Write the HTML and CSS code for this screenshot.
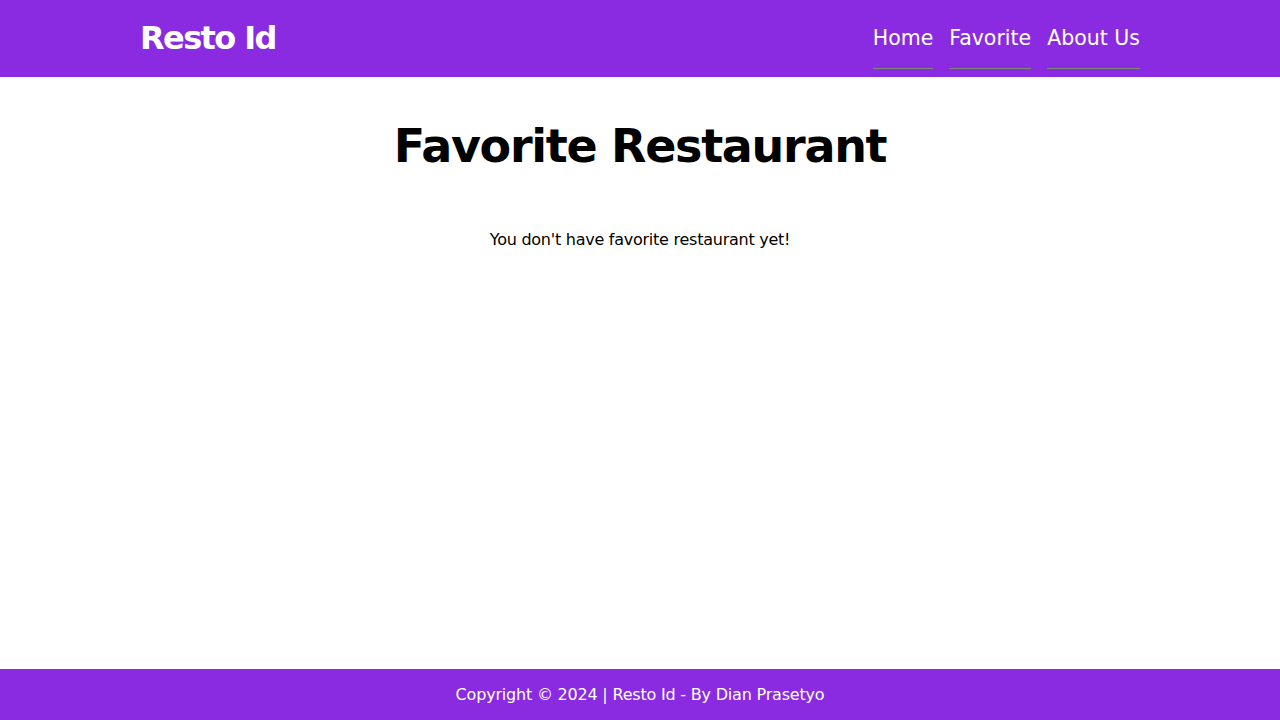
FILE: index.html
```html
<!DOCTYPE html>
<html lang="en">
<head>
<meta charset="utf-8">
<title>Resto Id</title>
<link rel="stylesheet" href="styles.css">
</head>
<body>
<header class="app-bar">
  <div class="app-bar__inner">
    <a class="brand" href="#">Resto Id</a>
    <nav class="nav">
      <a class="nav__link" href="#">Home</a>
      <a class="nav__link" href="#">Favorite</a>
      <a class="nav__link" href="#">About Us</a>
    </nav>
  </div>
</header>
<main class="content">
  <h1 class="content__title">Favorite Restaurant</h1>
  <p class="content__empty">You don't have favorite restaurant yet!</p>
</main>
<footer class="footer">
  <p class="footer__text">Copyright © 2024 | Resto Id - By Dian Prasetyo</p>
</footer>
</body>
</html>
```
FILE: styles.css
```css
* { box-sizing: border-box; }
html, body { height: 100%; }
body {
  margin: 0;
  font-family: "DejaVu Sans", "Open Sans", sans-serif;
  color: #000;
  background: #fff;
  display: flex;
  flex-direction: column;
}
.app-bar {
  background: #8a2be2;
  height: 77px;
}
.app-bar__inner {
  width: 1000px;
  margin: 0 auto;
  display: flex;
  justify-content: space-between;
  align-items: flex-start;
}
.brand {
  color: #fff;
  text-decoration: none;
  font-weight: 700;
  font-size: 32px;
  line-height: 1;
  margin-top: 22px;
  letter-spacing: -1.6px;
}
.nav {
  display: flex;
  gap: 16px;
}
.nav__link {
  color: #fff;
  text-decoration: none;
  font-size: 20.5px;
  line-height: 24px;
  padding: 26px 0 18px;
  border-bottom: 1px solid #7c8a6e;
}
.content {
  flex: 1;
  text-align: center;
}
.content__title {
  font-size: 46px;
  font-weight: 700;
  margin: 39px 0 0;
  line-height: 60px;
  letter-spacing: -1.3px;
}
.content__empty {
  font-size: 16px;
  margin: 54px 0 0;
  letter-spacing: -0.25px;
}
.footer {
  background: #8a2be2;
  height: 51px;
  display: flex;
  align-items: center;
  justify-content: center;
}
.footer__text {
  margin: 0;
  color: #fff;
  font-size: 16px;
  letter-spacing: -0.2px;
}
```
